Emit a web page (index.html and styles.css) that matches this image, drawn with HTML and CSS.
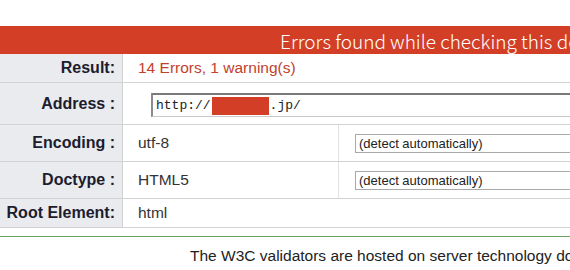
FILE: index.html
```html
<!DOCTYPE html>
<html lang="en">
<head>
    <meta charset="UTF-8">
    <meta name="viewport" content="width=device-width, initial-scale=1.0">
    <title>Validation Results</title>
    <link rel="stylesheet" href="styles.css">
</head>
<body>

    <div class="results">
        <h2 class="heading">Errors found while checking this document as HTML5!</h2>

        <!-- Result -->
        <div class="row row-result">
            <div class="label">Result:</div>
            <div class="value invalid">14 Errors, 1 warning(s)</div>
        </div>

        <!-- Address -->
        <div class="row row-address">
            <div class="label">Address :</div>
            <div class="value">
                <div class="uri-box">http://<span class="redacted"></span>.jp/</div>
            </div>
        </div>

        <!-- Encoding -->
        <div class="row row-option">
            <div class="label">Encoding :</div>
            <div class="value narrow">utf-8</div>
            <div class="option">
                <select class="picker">
                    <option>(detect automatically)</option>
                </select>
            </div>
        </div>

        <!-- Doctype -->
        <div class="row row-option">
            <div class="label">Doctype :</div>
            <div class="value narrow">HTML5</div>
            <div class="option">
                <select class="picker">
                    <option>(detect automatically)</option>
                </select>
            </div>
        </div>

        <!-- Root element -->
        <div class="row row-root">
            <div class="label">Root Element:</div>
            <div class="value">html</div>
        </div>
    </div>

    <div class="footer">
        <p>The W3C validators are hosted on server technology donated by HP, and supported by community donations.</p>
    </div>

</body>
</html>
```

FILE: styles.css
```css
html, body {
    overflow: hidden;
}
body {
    font-family: "Liberation Sans", Arial, sans-serif;
    background-color: #fff;
    color: #333;
    margin: 0;
    padding-top: 26px;
}
.results {
    width: 900px;
}
.heading {
    margin: 0;
    height: 28px;
    line-height: 30px;
    padding-left: 280px;
    background-color: #d33f26;
    color: #fff;
    font-family: "Noto Sans CJK JP", "DejaVu Sans", sans-serif;
    font-weight: 300;
    font-size: 19px;
    white-space: nowrap;
}
.row {
    display: flex;
    align-items: stretch;
    border-bottom: 1px solid #d2d2d2;
}
.row-result {
    height: 28px;
}
.row-address {
    height: 41px;
}
.row-option {
    height: 36px;
}
.row-root {
    height: 28px;
}
.label {
    width: 115px;
    padding-right: 7px;
    flex-shrink: 0;
    display: flex;
    align-items: center;
    justify-content: flex-end;
    background-color: #e9ebee;
    border-right: 1px solid #d2d2d2;
    color: #1c1c2e;
    font-weight: bold;
    font-size: 16px;
    white-space: nowrap;
}
.value {
    flex: 1;
    display: flex;
    align-items: center;
    padding-left: 15px;
    font-size: 15.5px;
    white-space: nowrap;
}
.value.narrow {
    flex: 0 0 200px;
}
.invalid {
    color: #c2412b;
}
.row-address .value {
    padding-left: 28px;
    padding-top: 3px;
}
.uri-box {
    flex: 1;
    height: 21px;
    display: flex;
    align-items: center;
    padding-left: 3px;
    border: 1px solid #c8c8c8;
    border-top: 2px solid #7a7a7a;
    border-left: 2px solid #8c8c8c;
    font-family: "Liberation Mono", "Courier New", monospace;
    font-size: 13px;
    color: #222;
}
.redacted {
    display: inline-block;
    width: 57px;
    height: 18px;
    margin: 0 1px 0 1px;
    background-color: #d33f26;
}
.option {
    flex: 1;
    display: flex;
    align-items: center;
    padding-left: 16px;
    border-left: 1px solid #e2e2e2;
}
.picker {
    appearance: none;
    -webkit-appearance: none;
    width: 400px;
    height: 19px;
    padding: 0 3px;
    border: 1px solid #a9a9a9;
    border-radius: 0;
    background-color: #fff;
    font-family: "Liberation Sans", Arial, sans-serif;
    font-size: 13px;
    color: #222;
}
.footer {
    margin-top: 8px;
    border-top: 1px solid #66a566;
    width: 900px;
}
.footer p {
    margin: 0;
    padding: 10px 0 0 190px;
    font-size: 15.5px;
    color: #222;
    white-space: nowrap;
}
```
